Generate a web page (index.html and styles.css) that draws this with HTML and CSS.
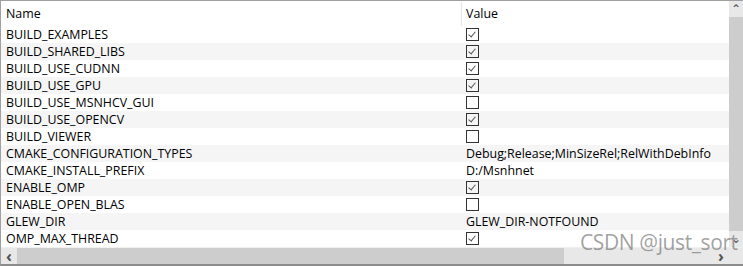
FILE: index.html
```html
<!DOCTYPE html>
<html lang="en">
<head>
    <meta charset="UTF-8">
    <title>CMake cache</title>
    <link rel="stylesheet" href="styles.css">
</head>
<body>
    <div class="panel">
        <div class="main">
            <div class="list">
                <div class="header">
                    <div class="col-name">Name</div>
                    <div class="col-value">Value</div>
                </div>
                <div class="row"><div class="col-name">BUILD_EXAMPLES</div><div class="col-value"><span class="check on"></span></div></div>
                <div class="row"><div class="col-name">BUILD_SHARED_LIBS</div><div class="col-value"><span class="check on"></span></div></div>
                <div class="row"><div class="col-name">BUILD_USE_CUDNN</div><div class="col-value"><span class="check on"></span></div></div>
                <div class="row"><div class="col-name">BUILD_USE_GPU</div><div class="col-value"><span class="check on"></span></div></div>
                <div class="row"><div class="col-name">BUILD_USE_MSNHCV_GUI</div><div class="col-value"><span class="check"></span></div></div>
                <div class="row"><div class="col-name">BUILD_USE_OPENCV</div><div class="col-value"><span class="check on"></span></div></div>
                <div class="row"><div class="col-name">BUILD_VIEWER</div><div class="col-value"><span class="check"></span></div></div>
                <div class="row"><div class="col-name">CMAKE_CONFIGURATION_TYPES</div><div class="col-value">Debug;Release;MinSizeRel;RelWithDebInfo</div></div>
                <div class="row"><div class="col-name">CMAKE_INSTALL_PREFIX</div><div class="col-value">D:/Msnhnet</div></div>
                <div class="row"><div class="col-name">ENABLE_OMP</div><div class="col-value"><span class="check on"></span></div></div>
                <div class="row"><div class="col-name">ENABLE_OPEN_BLAS</div><div class="col-value"><span class="check"></span></div></div>
                <div class="row"><div class="col-name">GLEW_DIR</div><div class="col-value">GLEW_DIR-NOTFOUND</div></div>
                <div class="row"><div class="col-name">OMP_MAX_THREAD</div><div class="col-value"><span class="check on"></span></div></div>
            </div>
            <div class="vscroll">
                <div class="arrow">&#8963;</div>
                <div class="vthumb"></div>
                <div class="arrow">&#8964;</div>
            </div>
        </div>
        <div class="hscroll">
            <div class="arrow">&lsaquo;</div>
            <div class="hthumb"></div>
            <div class="htrack"></div>
            <div class="arrow">&rsaquo;</div>
            <div class="corner"></div>
        </div>
        <div class="watermark">CSDN @just_sort</div>
    </div>
</body>
</html>
```

FILE: styles.css
```css
body {
    margin: 0;
    font-family: "Open Sans", "Noto Sans", sans-serif;
    font-size: 12.4px;
    color: #000;
    background: #fff;
}

.panel {
    position: relative;
    width: 743px;
    height: 266px;
    box-sizing: border-box;
    border-top: 1px solid #a0a0a0;
    border-left: 1px solid #a0a0a0;
    border-bottom: 2px solid #8c8c8c;
    display: flex;
    flex-direction: column;
    overflow: hidden;
}

.main {
    display: flex;
    height: 246px;
}

.list {
    flex: 1;
}

.header {
    display: flex;
    height: 25px;
    align-items: center;
}

.header .col-value {
    border-left: 1px solid #e5e5e5;
    height: 24px;
    display: flex;
    align-items: center;
    padding-left: 4px;
}

.row {
    display: flex;
    height: 17px;
    align-items: center;
}

.row:nth-child(odd) {
    background: #f5f5f5;
}

.col-name {
    width: 460px;
    padding-left: 5px;
    box-sizing: border-box;
}

.col-value {
    flex: 1;
    padding-left: 5px;
    white-space: nowrap;
}

.check {
    display: block;
    width: 11px;
    height: 11px;
    border: 1px solid #333;
    position: relative;
}

.check.on::after {
    content: "";
    position: absolute;
    left: 3px;
    top: 1px;
    width: 3px;
    height: 6px;
    border-right: 1px solid #555;
    border-bottom: 1px solid #555;
    transform: rotate(40deg);
}

.vscroll {
    width: 14px;
    background: #cdcdcd;
    display: flex;
    flex-direction: column;
    color: #505050;
}

.vscroll .arrow {
    height: 16px;
    font-size: 12px;
    line-height: 16px;
    text-align: center;
    background: #e8e8e8;
}

.vthumb {
    flex: 1;
    background: #cdcdcd;
}

.hscroll {
    display: flex;
    height: 17px;
    background: #e8e8e8;
    border-top: 1px solid #f0f0f0;
    color: #505050;
}

.hscroll .arrow {
    width: 16px;
    font-size: 16px;
    line-height: 16px;
    text-align: center;
    font-weight: bold;
}

.hthumb {
    width: 547px;
    background: #cdcdcd;
}

.htrack {
    flex: 1;
}

.corner {
    width: 14px;
    background: #e8e8e8;
}

.watermark {
    position: absolute;
    left: 579px;
    top: 227px;
    font-size: 21px;
    white-space: nowrap;
    color: rgba(120, 120, 120, 0.7);
    font-family: "Open Sans", sans-serif;
    letter-spacing: -0.4px;
}
```
